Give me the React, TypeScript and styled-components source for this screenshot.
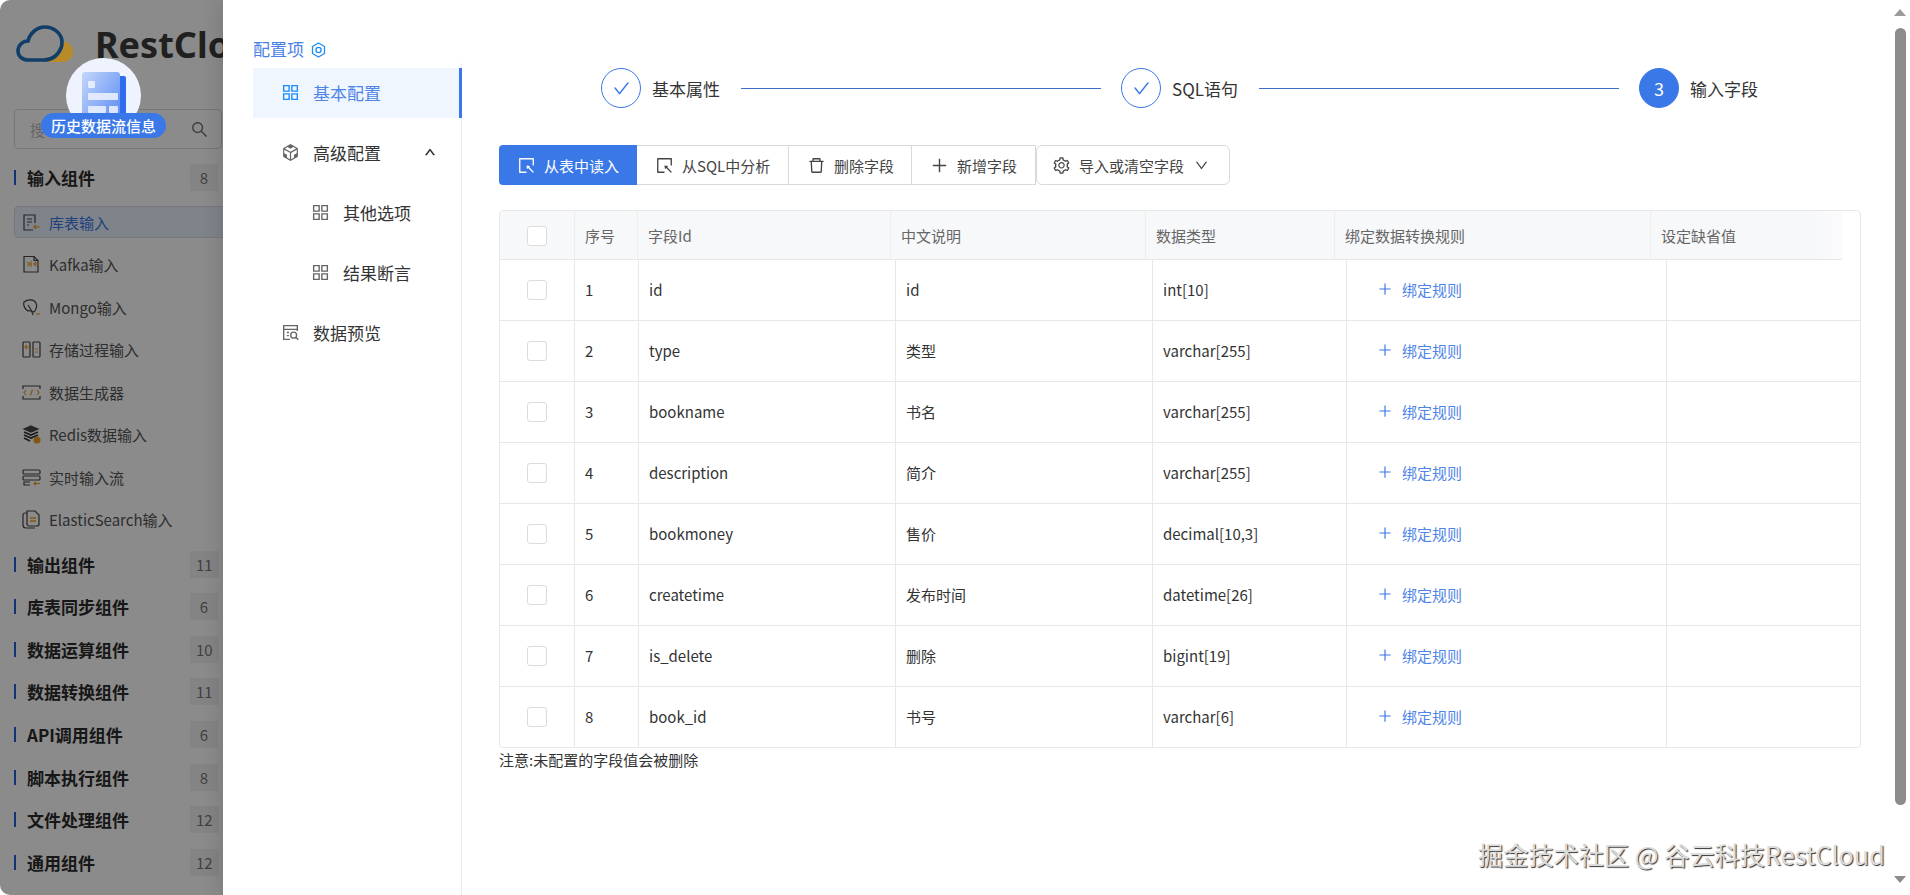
import React from "react";
import styled, { createGlobalStyle } from "styled-components";
import {
  AiOutlineAppstore,
  AiOutlineCheck,
  AiOutlineCodeSandbox,
  AiOutlineDelete,
  AiOutlineDown,
  AiOutlinePlus,
  AiOutlineSearch,
  AiOutlineSelect,
  AiOutlineSetting,
  AiOutlineUp,
} from "react-icons/ai";

const Global = createGlobalStyle`
  html, body { margin: 0; padding: 0; background: #fff; overflow: hidden; }
  * { box-sizing: border-box; }
  body { font-family: "Noto Sans CJK SC", "Noto Sans", sans-serif; color: #333; }
`;

const BLUE = "#3b78e7";

const Page = styled.div`
  position: relative;
  display: flex;
  width: 1910px;
  height: 895px;
  overflow: hidden;
`;

/* ---------- dimmed component sidebar ---------- */
const Sidebar = styled.aside`
  position: relative;
  flex: 0 0 223px;
  height: 895px;
  padding: 25px 0 0 14px;
  overflow: hidden;
  background: #fff;
  border-radius: 10px 0 0 10px;
`;
const Mask = styled.div`
  position: absolute;
  inset: 0;
  background: rgba(0, 0, 0, 0.455);
`;
const Brand = styled.div`
  position: relative;
  z-index: 2;
  display: flex;
  align-items: center;
  gap: 22px;
  height: 38px;
  margin-left: 2px;
  white-space: nowrap;
  svg { flex: none; }
`;
const BrandName = styled.span`
  flex: none;
  font-family: "Noto Sans", sans-serif;
  font-size: 36px;
  font-weight: 700;
  color: #202020;
`;
const Search = styled.div`
  display: flex;
  align-items: center;
  justify-content: space-between;
  width: 208px;
  height: 40px;
  margin-top: 46px;
  padding: 0 12px 0 15px;
  border: 1px solid #d9d9d9;
  border-radius: 4px;
  font-size: 15px;
  color: #bbb;
`;
const SearchGlyph = styled(AiOutlineSearch)`
  font-size: 19px;
  color: #777;
`;
const GroupRow = styled.div<{ $top: number }>`
  display: grid;
  grid-template-columns: 13px 163px auto;
  align-items: center;
  height: 27px;
  margin-top: ${(p) => p.$top}px;
`;
const GroupBar = styled.i`
  display: block;
  width: 2px;
  height: 15px;
  background: #2a5fd0;
`;
const GroupTitle = styled.span`
  font-size: 17px;
  font-weight: 700;
  line-height: 27px;
  color: #2b2b2b;
`;
const GroupCount = styled.span`
  justify-self: start;
  min-width: 28px;
  padding: 0 6px;
  font-size: 15px;
  line-height: 27px;
  text-align: center;
  color: #777;
  background: #f3f3f3;
`;
const ItemList = styled.div`
  display: flex;
  flex-direction: column;
  gap: 10.5px;
  margin-top: 15px;
`;
const Item = styled.div<{ $selected?: boolean }>`
  display: flex;
  align-items: center;
  gap: 8px;
  width: 220px;
  height: 32px;
  padding-left: 7px;
  font-size: 15px;
  white-space: nowrap;
  color: ${(p) => (p.$selected ? "#3b78e7" : "#555")};
  background: ${(p) => (p.$selected ? "#e9f1fd" : "transparent")};
  border: 1px solid ${(p) => (p.$selected ? "#d9dde6" : "transparent")};
  border-radius: 4px;
`;

/* floating history badge */
const Floating = styled.div`
  position: absolute;
  left: 41px;
  top: 58px;
  z-index: 5;
  width: 125px;
  height: 80px;
`;
const Disc = styled.div`
  width: 75px;
  height: 75px;
  margin-left: 25px;
  border-radius: 50%;
  background: #eef3fe;
  overflow: hidden;
  display: flex;
  justify-content: center;
  padding-top: 14px;
`;
const Pill = styled.div`
  position: absolute;
  left: 0;
  bottom: 0;
  width: 125px;
  height: 25px;
  border-radius: 13px;
  background: ${BLUE};
  color: #fff;
  font-size: 15px;
  font-weight: 500;
  line-height: 25px;
  text-align: center;
  white-space: nowrap;
`;

/* ---------- drawer ---------- */
const Drawer = styled.main`
  position: relative;
  z-index: 3;
  flex: 1;
  display: flex;
  height: 895px;
  padding-left: 30px;
  background: #fff;
  box-shadow: -6px 0 16px rgba(0, 0, 0, 0.1);
`;
const MenuColumn = styled.nav`
  flex: 0 0 209px;
  display: flex;
  flex-direction: column;
`;
const MenuHeading = styled.div`
  display: flex;
  align-items: center;
  gap: 7px;
  height: 63px;
  padding-top: 35px;
  font-size: 17px;
  line-height: 28px;
  color: #4a82e4;
`;
const MenuList = styled.div`
  flex: 1;
  display: flex;
  flex-direction: column;
  gap: 10px;
  padding-top: 5px;
  border-right: 1px solid #ececec;
`;
const MenuItem = styled.div<{ $active?: boolean; $sub?: boolean }>`
  display: flex;
  align-items: center;
  gap: 12px;
  height: 50px;
  margin-right: -1px;
  padding-left: ${(p) => (p.$sub ? 57 : 27)}px;
  padding-bottom: 2px;
  font-size: 17px;
  color: ${(p) => (p.$active ? "#4f85e6" : "#333")};
  background: ${(p) => (p.$active ? "#f0f6ff" : "transparent")};
  border-right: 3px solid ${(p) => (p.$active ? BLUE : "transparent")};
  svg { flex: none; font-size: 21px; color: ${(p) => (p.$active ? "#1d8cf8" : "#666")}; }
`;
const MenuChevron = styled(AiOutlineUp)`
  && {
    font-size: 12px;
    color: #222;
    margin-left: 31px;
    stroke: currentColor;
    stroke-width: 50;
  }
`;

const Content = styled.section`
  flex: 0 0 1362px;
  margin-left: 37px;
  padding-top: 68px;
`;
const Steps = styled.div`
  display: flex;
  align-items: center;
  height: 40px;
  padding: 0 103px 0 102px;
`;
const StepCircle = styled.span<{ $on?: boolean }>`
  flex: none;
  display: flex;
  align-items: center;
  justify-content: center;
  width: 40px;
  height: 40px;
  border-radius: 50%;
  border: 1px solid ${BLUE};
  color: ${(p) => (p.$on ? "#fff" : BLUE)};
  background: ${(p) => (p.$on ? BLUE : "#fff")};
  font-size: 18px;
  svg { font-size: 19px; }
`;
const StepLabel = styled.span`
  flex: none;
  margin-left: 11px;
  font-size: 17px;
  color: #333;
`;
const StepLine = styled.i`
  flex: 1;
  height: 1px;
  margin: 0 20px 0 21px;
  background: #3a6fc9;
`;

const Toolbar = styled.div`
  display: flex;
  width: 731px;
  height: 40px;
  margin-top: 37px;
`;
const ToolButton = styled.div<{ $w: number; $primary?: boolean; $last?: boolean }>`
  flex: 0 0 ${(p) => p.$w}px;
  display: flex;
  align-items: center;
  gap: 8px;
  padding-left: ${(p) => (p.$last ? 15 : 18)}px;
  font-size: 15px;
  white-space: nowrap;
  color: ${(p) => (p.$primary ? "#fff" : "#444")};
  background: ${(p) => (p.$primary ? BLUE : "#fff")};
  border: ${(p) => (p.$primary ? "none" : "1px solid #d9d9d9")};
  border-left: none;
  border-radius: ${(p) => (p.$primary ? "4px 0 0 4px" : p.$last ? "6px" : "0")};
  ${(p) => p.$last && "border-left: 1px solid #d9d9d9;"}
  svg { flex: none; font-size: 19px; }
`;
const DownMark = styled(AiOutlineDown)`
  && { font-size: 15px; margin-left: 2px; }
`;

const Table = styled.div`
  width: 1362px;
  margin-top: 25px;
  border: 1px solid #e8e8e8;
  border-radius: 4px;
  font-size: 15px;
`;
const HeadRow = styled.div`
  display: grid;
  grid-template-columns: 75px 63px 253px 255px 189px 316px 191px;
  height: 49px;
`;
const HeadCell = styled.div`
  display: flex;
  align-items: center;
  padding-left: 10px;
  color: #666;
  background: #f7f8fa;
  border-right: 1px solid #eeeeee;
  border-bottom: 1px solid #e8e8e8;
  &:last-child { border-right: none; background: linear-gradient(90deg, #f7f8fa 85%, #fbfbfc); }
`;
const BodyRow = styled.div`
  display: grid;
  grid-template-columns: 75px 64px 257px 257px 194px 320px 1fr;
  height: 61px;
  border-bottom: 1px solid #e8e8e8;
  &:last-child { height: 60px; border-bottom: none; }
`;
const BodyCell = styled.div`
  display: flex;
  align-items: center;
  padding: 0 0 2px 10px;
  color: #333;
  border-right: 1px solid #e8e8e8;
  &:last-child { border-right: none; }
`;
const CheckCell = styled(BodyCell)`
  padding: 0 0 0 27px;
`;
const HeadCheckCell = styled(HeadCell)`
  padding: 2px 0 0 27px;
`;
const Check = styled.span`
  display: block;
  width: 20px;
  height: 20px;
  background: #fff;
  border: 1px solid #dcdcdc;
  border-radius: 3px;
`;
const BindCell = styled(BodyCell)`
  gap: 9px;
  padding-left: 30px;
  color: #4f85e6;
  svg { font-size: 16px; color: ${BLUE}; }
`;
const Note = styled.div`
  font-size: 15px;
  line-height: 24px;
  color: #333;
`;

const ScrollTrack = styled.div`
  flex: 0 0 15px;
  margin-left: 34px;
  display: flex;
  flex-direction: column;
  align-items: flex-start;
`;
const ArrowUp = styled.i`
  margin: 9px 0 0 -1px;
  width: 0;
  height: 0;
  border: 6.5px solid transparent;
  border-top: none;
  border-bottom: 7px solid #9a9a9a;
`;
const Thumb = styled.div`
  width: 11px;
  height: 777px;
  margin-top: 12px;
  border-radius: 6px;
  background: #8c8c8c;
`;
const ArrowDown = styled.i`
  margin: 71px 0 0 -1px;
  width: 0;
  height: 0;
  border: 6.5px solid transparent;
  border-bottom: none;
  border-top: 7px solid #8c8c8c;
`;

const Watermark = styled.div`
  position: absolute;
  left: 1478px;
  top: 837px;
  z-index: 6;
  font-size: 25.2px;
  line-height: 34px;
  white-space: nowrap;
  color: #dcdcdc;
  text-shadow: 1px 1px 1px #333;
`;

/* ---------- drawings ---------- */
const Logo = () => (
  <svg width="57" height="38" viewBox="0 0 57 38" fill="none">
    <path d="M44 16C52 15 57 21 57 27C57 33 52 37 46 37L27 37C38 36 47 30 47 20Z" fill="#b98a28" />
    <path
      d="M12 35C6 35 2 31 2 26C2 20 7 16 12 16C14 8 21 2 29 2C38 2 46 9 46 17C46 19 46 21 45 23C42 30 36 35 28 35Z"
      stroke="#103e69"
      strokeWidth="3.6"
    />
  </svg>
);

const DocBadge = () => (
  <svg width="46" height="62" viewBox="0 0 46 62">
    <defs>
      <linearGradient id="docFill" x1="0" y1="0" x2="1" y2="1">
        <stop offset="0" stopColor="#c4d6fb" />
        <stop offset="1" stopColor="#4d82f2" />
      </linearGradient>
    </defs>
    <rect x="37" y="4" width="8" height="58" rx="2" fill="#2f6cf0" />
    <rect x="1" y="0" width="38" height="62" rx="3" fill="url(#docFill)" />
    <rect x="7" y="9" width="7" height="7" rx="1" fill="#eef3fe" opacity=".85" />
    <rect x="7" y="21" width="30" height="7" rx="1" fill="#eef3fe" opacity=".85" />
    <rect x="7" y="34" width="18" height="7" rx="1" fill="#eef3fe" opacity=".85" />
    <rect x="28" y="34" width="9" height="7" rx="1" fill="#eef3fe" opacity=".85" />
  </svg>
);

const InkIcon = styled.svg`
  flex: none;
  width: 19px;
  height: 19px;
  fill: none;
  stroke: #444;
  stroke-width: 1.2;
`;
const ORANGE = "#f0a020";

const sideIcons: React.ReactNode[] = [
  <InkIcon key="0" viewBox="0 0 19 19">
    <path d="M13 10V2H2v15h9" />
    <path d="M5 6h5M5 9h5M5 12h2" />
    <path d="M18 14h-6M14 12l-2 2 2 2" stroke={ORANGE} />
  </InkIcon>,
  <InkIcon key="1" viewBox="0 0 19 19">
    <path d="M2 1.500h10l4 4V17H2z" />
    <path d="M12 1.500v4h4" />
    <path d="M5 7l3 2-3 2M9 6v6M17 9h-5M14 7l-2 2 2 2" stroke={ORANGE} />
  </InkIcon>,
  <InkIcon key="2" viewBox="0 0 19 19">
    <path d="M2 4c4-3 10-3 12 1 1.500 3 0 7-2 9-3-1-4-2-6-1-3-2-5-5-4-9z" />
    <path d="M6 7c2 3 4 6 5 10" />
    <path d="M18 16h-4" stroke={ORANGE} />
  </InkIcon>,
  <InkIcon key="3" viewBox="0 0 19 19">
    <rect x="1" y="2" width="7" height="15" rx="1" />
    <rect x="11" y="2" width="7" height="15" rx="1" />
    <path d="M7 7H3M5 5L3 7l2 2" stroke={ORANGE} />
    <path d="M13 9h3M13 12h3" stroke={ORANGE} />
  </InkIcon>,
  <InkIcon key="4" viewBox="0 0 19 19">
    <path d="M1 6V3h17v3M1 13v3h17v-3" />
    <path d="M4 7L2 9.500 4 12M15 7l2 2.500L15 12M10.500 6.500L8.500 12.500" stroke={ORANGE} />
  </InkIcon>,
  <InkIcon key="5" viewBox="0 0 19 19">
    <path d="M9 1l7 3-7 3-7-3z" fill="#444" />
    <path d="M2 7l7 3 7-3M2 10l7 3 7-3M2 13l6 3" stroke="#333" strokeWidth="1.700" />
    <circle cx="15" cy="15" r="3.500" fill={ORANGE} stroke="none" />
  </InkIcon>,
  <InkIcon key="6" viewBox="0 0 19 19">
    <rect x="1" y="2" width="17" height="4" rx="1" />
    <rect x="1" y="8" width="17" height="4" rx="1" />
    <path d="M8 14H2v3h6" />
    <path d="M18 15.500h-6M14 14l-2 1.500 2 1.500" stroke={ORANGE} />
  </InkIcon>,
  <InkIcon key="7" viewBox="0 0 19 19">
    <path d="M5 3H3c-1 0-2 1-2 2v10c0 2 1 3 3 3h9" />
    <path d="M5 1h8l4 4v9c0 1-1 2-2 2H7c-1 0-2-1-2-2z" />
    <path d="M8 8h6M8 11h6" stroke={ORANGE} strokeWidth="1.500" />
  </InkIcon>,
];

const HexIcon = () => (
  <svg width="15" height="16" viewBox="0 0 15 16" fill="none" stroke="#1d8cf8" strokeWidth="1.300" style={{ marginTop: 2 }}>
    <path d="M7.500 1l6 3.500v7L7.500 15l-6-3.500v-7z" />
    <circle cx="7.500" cy="8" r="2.600" />
  </svg>
);

const PreviewIcon = () => (
  <svg width="21" height="21" viewBox="-1.500 -1.500 20 20" fill="none" stroke="#666" strokeWidth="1.300">
    <path d="M15 7V2H2v13h6" />
    <path d="M2 5.500h13M5 8.500h2M5 11.500h2" />
    <circle cx="11.500" cy="11" r="2.800" />
    <path d="M13.500 13l2.500 2.500" />
  </svg>
);

/* ---------- data ---------- */
const items = ["库表输入", "Kafka输入", "Mongo输入", "存储过程输入", "数据生成器", "Redis数据输入", "实时输入流", "ElasticSearch输入"];
const groups: [string, number][] = [
  ["输出组件", 11],
  ["库表同步组件", 6],
  ["数据运算组件", 10],
  ["数据转换组件", 11],
  ["API调用组件", 6],
  ["脚本执行组件", 8],
  ["文件处理组件", 12],
  ["通用组件", 12],
];
const heads = ["序号", "字段Id", "中文说明", "数据类型", "绑定数据转换规则", "设定缺省值"];
const rows = [
  ["1", "id", "id", "int[10]"],
  ["2", "type", "类型", "varchar[255]"],
  ["3", "bookname", "书名", "varchar[255]"],
  ["4", "description", "简介", "varchar[255]"],
  ["5", "bookmoney", "售价", "decimal[10,3]"],
  ["6", "createtime", "发布时间", "datetime[26]"],
  ["7", "is_delete", "删除", "bigint[19]"],
  ["8", "book_id", "书号", "varchar[6]"],
];

export default function App() {
  return (
    <Page>
      <Global />
      <Sidebar>
        <Brand>
          <Logo />
          <BrandName>RestCloud</BrandName>
        </Brand>
        <Search>
          <span>搜</span>
          <SearchGlyph />
        </Search>
        <GroupRow $top={15}>
          <GroupBar />
          <GroupTitle>输入组件</GroupTitle>
          <GroupCount>8</GroupCount>
        </GroupRow>
        <ItemList>
          {items.map((t, i) => (
            <Item key={t} $selected={i === 0}>
              {sideIcons[i]}
              {t}
            </Item>
          ))}
        </ItemList>
        {groups.map(([t, n], i) => (
          <GroupRow key={t} $top={i === 0 ? 15 : 15.63}>
            <GroupBar />
            <GroupTitle>{t}</GroupTitle>
            <GroupCount>{n}</GroupCount>
          </GroupRow>
        ))}
        <Mask />
      </Sidebar>
      <Floating>
        <Disc>
          <DocBadge />
        </Disc>
        <Pill>历史数据流信息</Pill>
      </Floating>

      <Drawer>
        <MenuColumn>
          <MenuHeading>
            配置项
            <HexIcon />
          </MenuHeading>
          <MenuList>
            <MenuItem $active>
              <AiOutlineAppstore />
              基本配置
            </MenuItem>
            <MenuItem>
              <AiOutlineCodeSandbox />
              高级配置
              <MenuChevron />
            </MenuItem>
            <MenuItem $sub>
              <AiOutlineAppstore />
              其他选项
            </MenuItem>
            <MenuItem $sub>
              <AiOutlineAppstore />
              结果断言
            </MenuItem>
            <MenuItem>
              <PreviewIcon />
              数据预览
            </MenuItem>
          </MenuList>
        </MenuColumn>

        <Content>
          <Steps>
            <StepCircle>
              <AiOutlineCheck />
            </StepCircle>
            <StepLabel>基本属性</StepLabel>
            <StepLine />
            <StepCircle>
              <AiOutlineCheck />
            </StepCircle>
            <StepLabel>SQL语句</StepLabel>
            <StepLine />
            <StepCircle $on>3</StepCircle>
            <StepLabel>输入字段</StepLabel>
          </Steps>

          <Toolbar>
            <ToolButton $w={138} $primary>
              <AiOutlineSelect />
              从表中读入
            </ToolButton>
            <ToolButton $w={152}>
              <AiOutlineSelect />
              从SQL中分析
            </ToolButton>
            <ToolButton $w={123}>
              <AiOutlineDelete />
              删除字段
            </ToolButton>
            <ToolButton $w={124}>
              <AiOutlinePlus />
              新增字段
            </ToolButton>
            <ToolButton $w={194} $last>
              <AiOutlineSetting />
              导入或清空字段
              <DownMark />
            </ToolButton>
          </Toolbar>

          <Table>
            <HeadRow>
              <HeadCheckCell>
                <Check />
              </HeadCheckCell>
              {heads.map((h) => (
                <HeadCell key={h}>{h}</HeadCell>
              ))}
            </HeadRow>
            {rows.map((r) => (
              <BodyRow key={r[0]}>
                <CheckCell>
                  <Check />
                </CheckCell>
                {r.map((c, i) => (
                  <BodyCell key={i}>{c}</BodyCell>
                ))}
                <BindCell>
                  <AiOutlinePlus />
                  绑定规则
                </BindCell>
                <BodyCell />
              </BodyRow>
            ))}
          </Table>
          <Note>注意:未配置的字段值会被删除</Note>
        </Content>

        <ScrollTrack>
          <ArrowUp />
          <Thumb />
          <ArrowDown />
        </ScrollTrack>
      </Drawer>

      <Watermark>掘金技术社区 @ 谷云科技RestCloud</Watermark>
    </Page>
  );
}
